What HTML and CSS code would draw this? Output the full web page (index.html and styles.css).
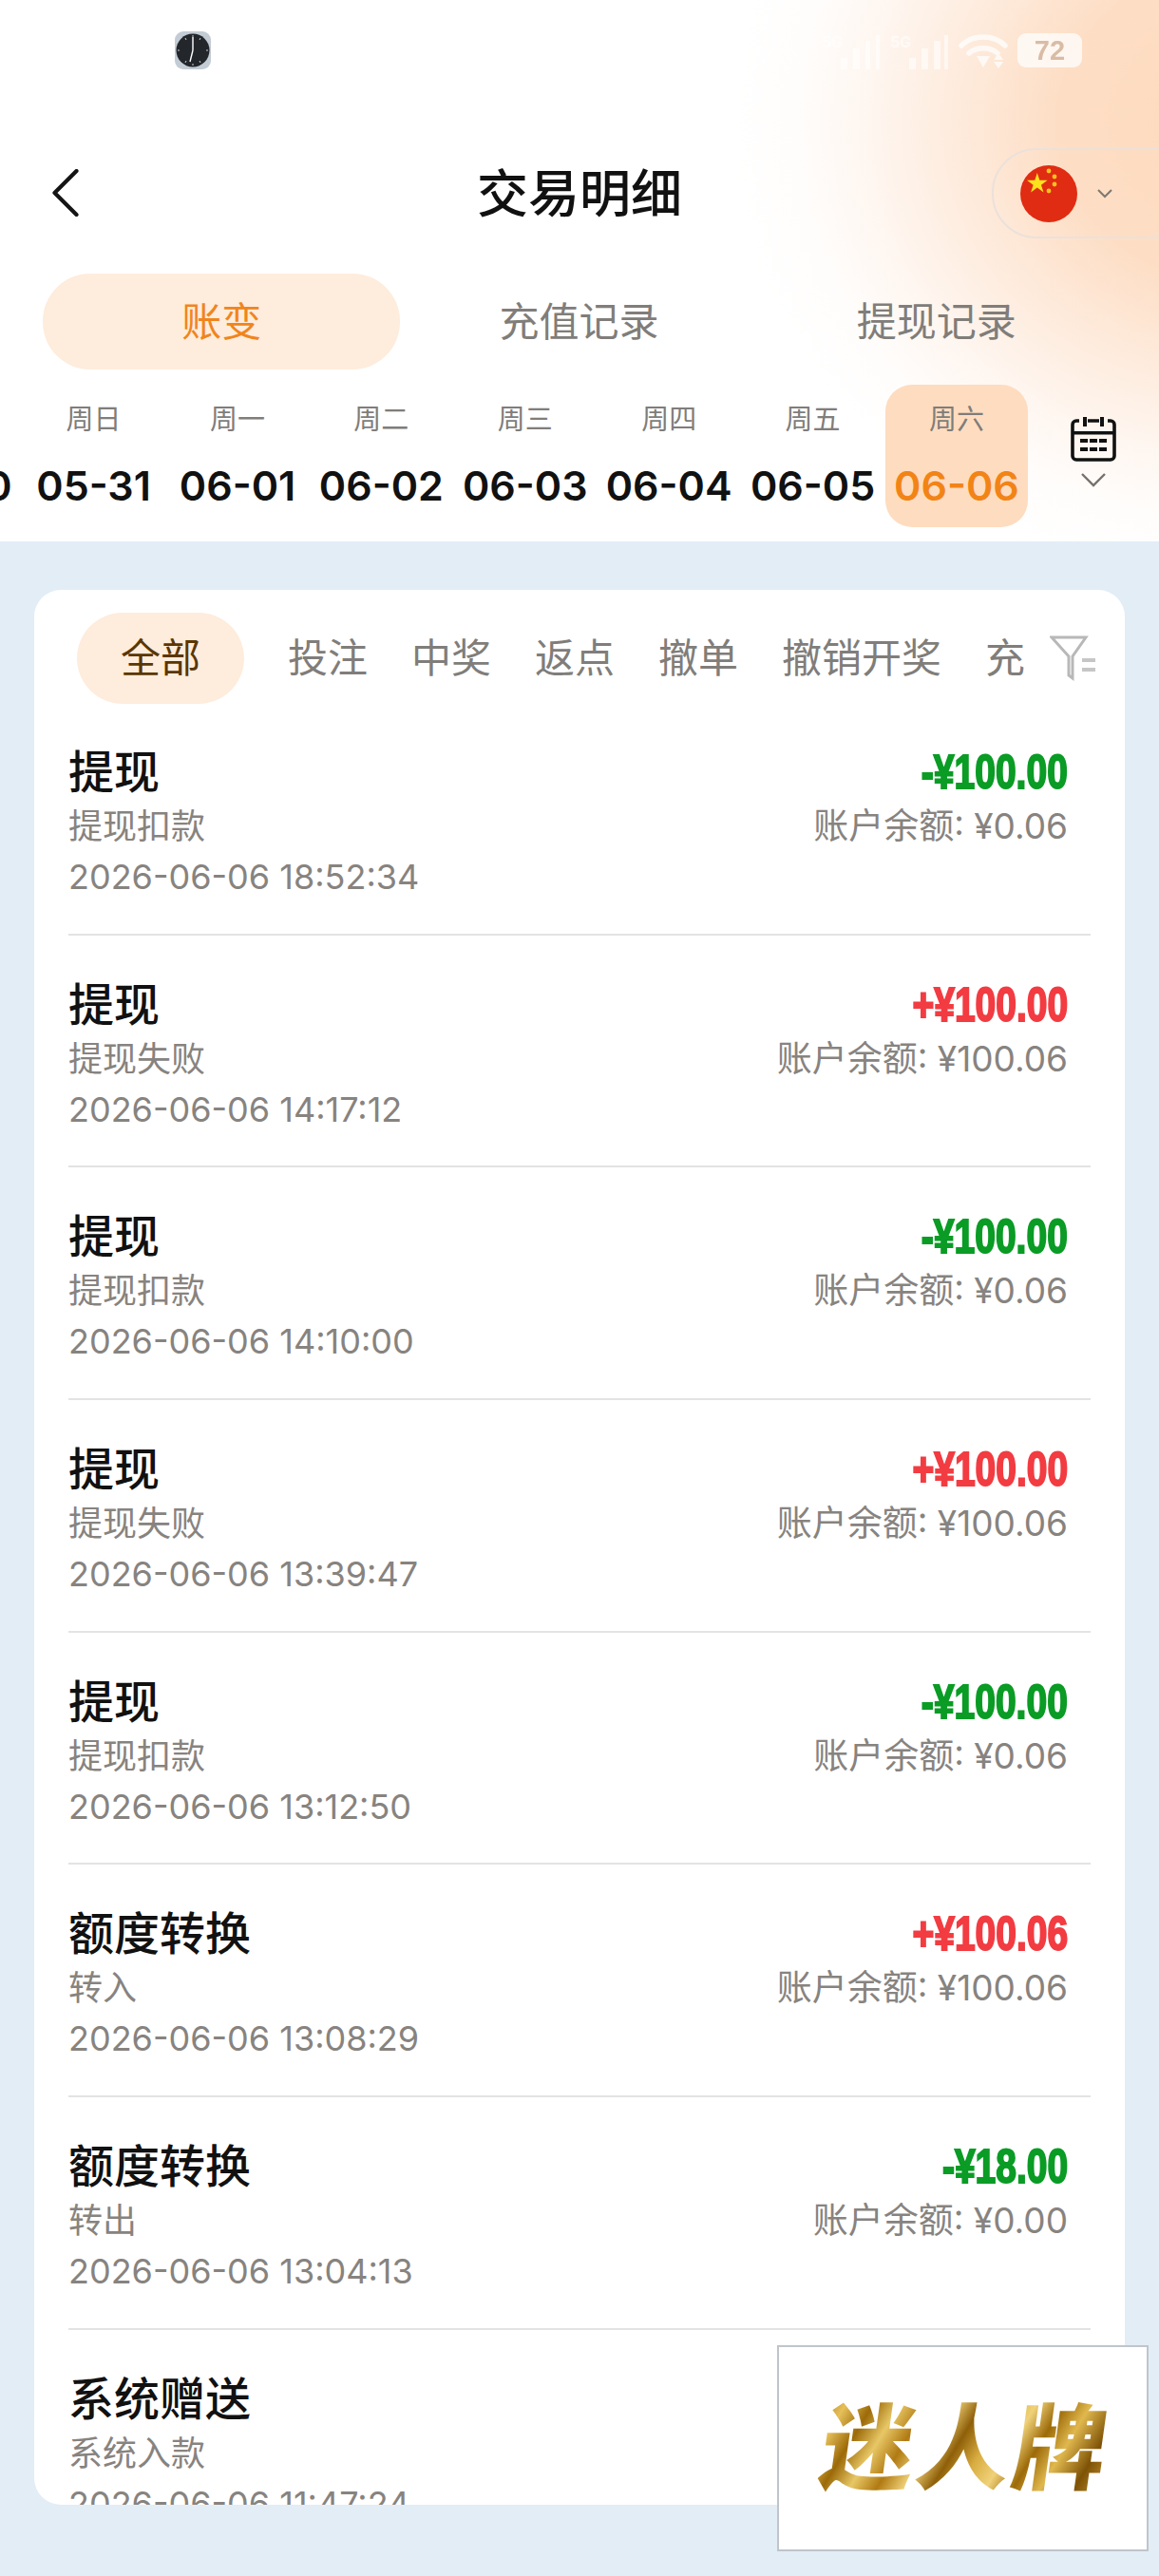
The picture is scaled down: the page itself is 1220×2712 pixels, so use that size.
FILE: index.html
```html
<!DOCTYPE html>
<html lang="zh-CN">
<head>
<meta charset="utf-8">
<title>交易明细</title>
<link rel="stylesheet" href="styles.css">
</head>
<body>
<header class="head">
  <div class="status">
    <svg class="clock" viewBox="0 0 38 40"><rect width="38" height="40" rx="9" fill="#c3ccd4"/><circle cx="19" cy="20" r="17.5" fill="#23262b"/><path d="M19 20V6M19 20l-3 12" stroke="#fff" stroke-width="1.4" fill="none"/><path d="M19 4v2M19 34v2M33 20h2M3 20h2M27 7l-1 2M11 7l1 2M27 33l-1-2M11 33l1-2" stroke="#ccd" stroke-width="1" fill="none"/></svg>
    <div class="sys">
      <svg class="vib" viewBox="0 0 60 40"><path d="M8 34 30 6l22 28M18 34 30 18l12 16" fill="none" stroke="#fff" stroke-width="2" opacity=".55"/></svg>
      <div class="sig"><span class="five">5G</span><svg class="bars" viewBox="0 0 46 36"><path d="M4 36V24h7v12zM17 36V14h7v22zM30 36V6h5v30zM41 36V0h4v36z" fill="#fff" opacity=".75"/></svg></div>
      <div class="sig"><span class="five">5G</span><svg class="bars" viewBox="0 0 46 36"><path d="M4 36V24h7v12zM17 36V14h7v22zM30 36V6h7v30zM41 36V0h4v36z" fill="#fff" opacity=".75"/></svg></div>
      <svg class="wifi" viewBox="0 0 52 37"><path d="M3 13C15 1 37 1 49 13M11 21c8-7 22-7 30 0" fill="none" stroke="#fff" stroke-width="5.5" stroke-linecap="round"/><path d="M19 24h14l-7 12zM42 21l5 7H37zM37 30h10l-5 7z" fill="#fff"/></svg>
      <div class="batt">72</div>
    </div>
  </div>
  <nav class="nav">
    <svg class="back" viewBox="0 0 28 50"><path d="M26 2 3 25l23 23" fill="none" stroke="#151515" stroke-width="4.2" stroke-linecap="round" stroke-linejoin="round"/></svg>
    <h1 class="title">交易明细</h1>
    <div class="lang">
      <svg class="flag" viewBox="0 0 60 60"><circle cx="30" cy="30" r="30" fill="#e02c12"/><path d="M15 7l3.5 10.8H30l-9.2 6.7 3.5 10.8-9.3-6.7-9.3 6.7 3.5-10.8L0 17.800h11.500z" transform="translate(7 3) scale(.72)" fill="#fbe21d"/><circle cx="30" cy="6" r="2.400" fill="#fbc21d"/><circle cx="36" cy="12" r="2.400" fill="#fbc21d"/><circle cx="36" cy="20" r="2.400" fill="#fbc21d"/><circle cx="30" cy="27" r="2.400" fill="#fbc21d"/></svg>
      <svg class="lang-arrow" viewBox="0 0 16 10"><path d="M1 1l7 7 7-7" fill="none" stroke="#7d7872" stroke-width="2"/></svg>
    </div>
  </nav>
  <div class="tabs">
    <div class="tab tab-on">账变</div>
    <div class="tab">充值记录</div>
    <div class="tab">提现记录</div>
  </div>
  <div class="week">
    <div class="days">
      <div class="day"><span class="wd">周六</span><span class="dt">05-30</span></div>
      <div class="day"><span class="wd">周日</span><span class="dt">05-31</span></div>
      <div class="day"><span class="wd">周一</span><span class="dt">06-01</span></div>
      <div class="day"><span class="wd">周二</span><span class="dt">06-02</span></div>
      <div class="day"><span class="wd">周三</span><span class="dt">06-03</span></div>
      <div class="day"><span class="wd">周四</span><span class="dt">06-04</span></div>
      <div class="day"><span class="wd">周五</span><span class="dt">06-05</span></div>
      <div class="day day-on"><span class="wd">周六</span><span class="dt">06-06</span></div>
    </div>
    <div class="cal">
      <svg class="cal-icon" viewBox="0 0 48 48"><path d="M9 5H6a4 4 0 0 0-4 4v33a4 4 0 0 0 4 4h36a4 4 0 0 0 4-4V9a4 4 0 0 0-4-4h-3M18 5h12" fill="none" stroke="#111" stroke-width="3.600"/><path d="M13 1h4v10h-4zM31 1h4v10h-4zM3 16h42v3.500H3zM10 24h8v4h-8zM20 24h8v4h-8zM30 24h8v4h-8zM10 33h8v4h-8zM20 33h8v4h-8zM30 33h8v4h-8z" fill="#111"/></svg>
      <svg class="cal-arrow" viewBox="0 0 28 16"><path d="M2 2l12 12L26 2" fill="none" stroke="#77716c" stroke-width="2.400"/></svg>
    </div>
  </div>
</header>
<main class="card">
  <div class="filters">
    <div class="scroll">
      <div class="chip chip-on">全部</div>
      <div class="chip">投注</div>
      <div class="chip">中奖</div>
      <div class="chip">返点</div>
      <div class="chip">撤单</div>
      <div class="chip">撤销开奖</div>
      <div class="chip">充值</div>
    </div>
    <svg class="funnel" viewBox="0 0 48 48"><path d="M2 2h36L24 22v23l-4-3V22z" fill="none" stroke="#b8b8b8" stroke-width="3"/><path d="M34 24h14v4H34zM34 34h14v4H34z" fill="#c6c6c6"/></svg>
  </div>
  <div class="list">
    <div class="row"><div class="left"><div class="name">提现</div><div class="sub">提现扣款</div><div class="time">2026-06-06 18:52:34</div></div><div class="right"><div class="amt minus">-¥100.00</div><div class="bal">账户余额: ¥0.06</div></div></div>
    <div class="row"><div class="left"><div class="name">提现</div><div class="sub">提现失败</div><div class="time">2026-06-06 14:17:12</div></div><div class="right"><div class="amt plus">+¥100.00</div><div class="bal">账户余额: ¥100.06</div></div></div>
    <div class="row"><div class="left"><div class="name">提现</div><div class="sub">提现扣款</div><div class="time">2026-06-06 14:10:00</div></div><div class="right"><div class="amt minus">-¥100.00</div><div class="bal">账户余额: ¥0.06</div></div></div>
    <div class="row"><div class="left"><div class="name">提现</div><div class="sub">提现失败</div><div class="time">2026-06-06 13:39:47</div></div><div class="right"><div class="amt plus">+¥100.00</div><div class="bal">账户余额: ¥100.06</div></div></div>
    <div class="row"><div class="left"><div class="name">提现</div><div class="sub">提现扣款</div><div class="time">2026-06-06 13:12:50</div></div><div class="right"><div class="amt minus">-¥100.00</div><div class="bal">账户余额: ¥0.06</div></div></div>
    <div class="row"><div class="left"><div class="name">额度转换</div><div class="sub">转入</div><div class="time">2026-06-06 13:08:29</div></div><div class="right"><div class="amt plus">+¥100.06</div><div class="bal">账户余额: ¥100.06</div></div></div>
    <div class="row"><div class="left"><div class="name">额度转换</div><div class="sub">转出</div><div class="time">2026-06-06 13:04:13</div></div><div class="right"><div class="amt minus">-¥18.00</div><div class="bal">账户余额: ¥0.00</div></div></div>
    <div class="row"><div class="left"><div class="name">系统赠送</div><div class="sub">系统入款</div><div class="time">2026-06-06 11:47:24</div></div><div class="right"></div></div>
  </div>
</main>
<aside class="brand"><span class="brand-text">迷人牌</span></aside>
</body>
</html>
```
FILE: styles.css
```css
* { box-sizing: border-box; }
html, body { margin: 0; padding: 0; }
body {
  width: 1220px;
  height: 2712px;
  overflow: hidden;
  position: relative;
  background: #e2edf6;
  font-family: Inter, "Noto Sans CJK SC", sans-serif;
  color: #111;
}
.head {
  height: 570px;
  overflow: hidden;
  background:
    radial-gradient(ellipse 520px 480px at 1290px 130px, #fddabd 0%, rgba(253,219,192,.92) 34%, rgba(253,222,198,.66) 52%, rgba(253,228,210,.34) 72%, rgba(254,238,226,.12) 87%, rgba(255,255,255,0) 100%),
    #fff;
}
.status { height: 156px; padding: 33px 0 0 184px; display: flex; justify-content: space-between; align-items: flex-start; }
.clock { width: 38px; height: 40px; }
.sys { display: flex; align-items: flex-start; gap: 10px; padding: 2px 81px 0 0; opacity: .75; }
.vib { width: 60px; height: 36px; opacity: .7; margin-right: 2px; }
.sig { position: relative; width: 62px; height: 38px; }
.five { position: absolute; left: 0; top: 0; font-size: 16px; font-weight: 700; color: #fff; opacity: .75; line-height: 18px; }
.bars { position: absolute; right: 0; bottom: 0; width: 46px; height: 36px; }
.wifi { width: 52px; height: 37px; }
.batt { width: 68px; height: 36px; border-radius: 9px; background: #fff; color: #cdb09a; font: 700 29px/36px "Liberation Sans", sans-serif; text-align: center; }

.nav { height: 95px; display: flex; align-items: center; padding-left: 54px; position: relative; }
.back { width: 29px; height: 50px; flex: none; margin-top: -1px; }
.title { position: absolute; left: 0; right: 0; top: 0; margin: 0; text-align: center; font-size: 54px; line-height: 98px; font-weight: 500; color: #111; }
.lang {
  margin-left: auto; margin-right: -10px; width: 186px; height: 95px;
  border: 2px solid #ebe1da; border-radius: 47px 0 0 47px;
  display: flex; align-items: center; gap: 21px; padding-left: 28px;
}
.flag { width: 60px; height: 60px; flex: none; }
.lang-arrow { width: 16px; height: 10px; }

.tabs { margin-top: 37px; padding: 0 46px 0 45px; display: flex; height: 101px; }
.tab { flex: 1; border-radius: 50px; text-align: center; font-size: 42px; line-height: 101px; color: #807d7a; }
.tab-on { background: #feecdc; color: #f0851c; }

.week { margin-top: 16px; height: 150px; display: flex; position: relative; }
.days { display: flex; gap: 1.400px; margin-left: -127.800px; }
.day { width: 150px; height: 150px; flex: none; border-radius: 28px; display: flex; flex-direction: column; align-items: center; padding-top: 17px; }
.day-on { background: #fedcc0; }
.wd { font-size: 29px; line-height: 40px; color: #807d7a; }
.dt { font-size: 43px; line-height: 60px; margin-top: 19px; font-weight: 600; color: #111; white-space: nowrap; }
.day-on .dt { color: #f28416; }
.cal { width: 48px; margin-left: 45px; padding-top: 33px; display: flex; flex-direction: column; align-items: center; gap: 11px; }
.cal-icon { width: 48px; height: 48px; }
.cal-arrow { width: 28px; height: 16px; }

.card { position: absolute; left: 36px; top: 621px; width: 1148px; height: 2016px; background: #fff; border-radius: 28px; overflow: hidden; }
.filters { height: 119px; padding: 24px 31px 0 45px; display: flex; position: relative; }
.scroll { width: 997px; height: 96px; display: flex; gap: 46px; overflow: hidden; flex: none; }
.chip { flex: none; font-size: 42px; line-height: 96px; color: #807d7a; white-space: nowrap; }
.chip-on { background: #feecdc; color: #5a3600; width: 176px; height: 96px; border-radius: 48px; text-align: center; }
.funnel { width: 48px; height: 48px; flex: none; margin: 24px 0 0 27px; }

.row { height: 244.670px; margin: 0 36px; padding: 44px 24px 0 0; border-bottom: 2px solid #e3e3e3; display: flex; justify-content: space-between; }
.name { font-size: 48px; line-height: 58px; font-weight: 500; color: #111; }
.sub { font-size: 36px; line-height: 50px; margin-top: 3px; color: #87837f; }
.time { font-size: 36px; line-height: 52px; margin-top: 2px; color: #87837f; }
.right { text-align: right; }
.amt { font-family: "Liberation Sans", sans-serif; font-weight: 700; font-size: 50px; line-height: 58px; -webkit-text-stroke: 2px currentColor; transform: scaleX(.78); transform-origin: right center; white-space: nowrap; }
.minus { color: #0a9c25; }
.plus { color: #f23c42; }
.bal { font-size: 37px; line-height: 50px; margin-top: 3px; color: #87837f; }

.brand { position: absolute; left: 818px; top: 2469px; width: 391px; height: 217px; background: #fff; border: 2px solid #bfc5cb; display: flex; align-items: center; justify-content: center; padding-left: 8px; }
.brand-text {
  font-family: "Noto Sans CJK SC", sans-serif; font-size: 98px; line-height: 120px; font-weight: 900; letter-spacing: 3px;
  transform: translateY(-8px) skewX(-8deg);
  background: linear-gradient(115deg, #b27a10 0%, #e6c05a 8%, #9c6a08 16%, #e8c766 24%, #b07a12 32%, #f0d27a 40%, #8e5f08 48%, #d8ac40 56%, #f0d27a 64%, #9c6a08 72%, #e0b84e 80%, #7e5206 90%, #c89a30 100%);
  -webkit-background-clip: text; background-clip: text; color: transparent;
}
```
